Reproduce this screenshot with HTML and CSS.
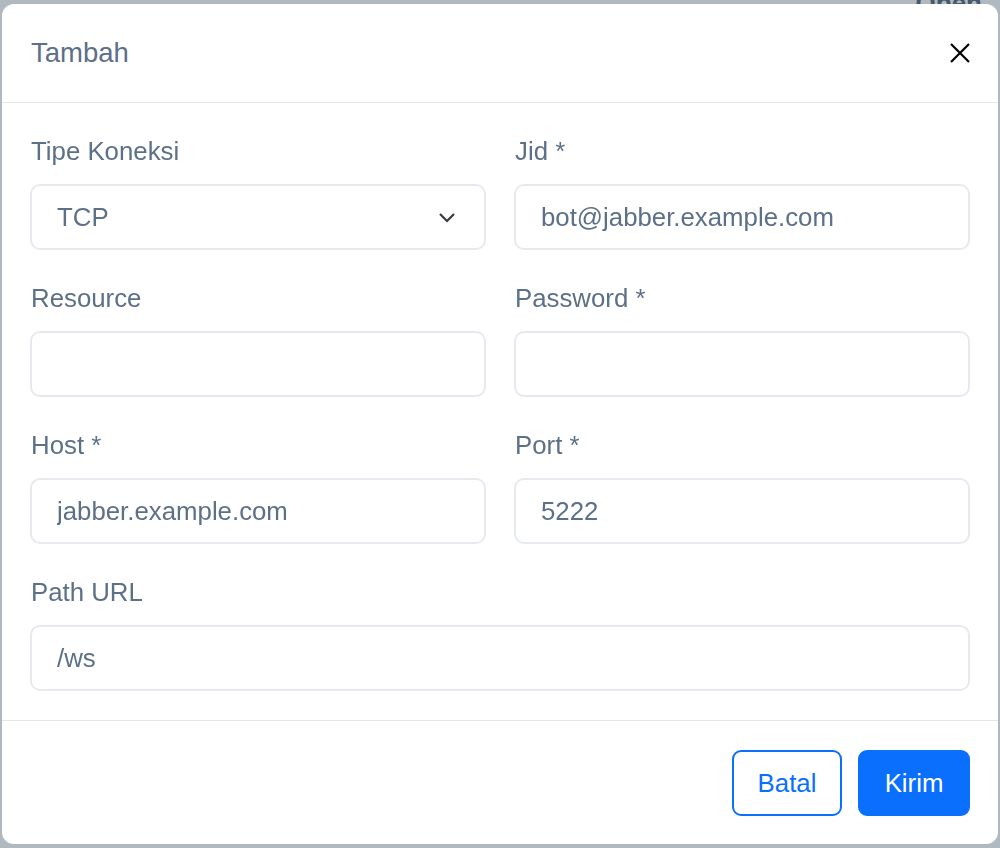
FILE: index.html
```html
<!DOCTYPE html>
<html lang="id">
<head>
    <meta charset="UTF-8">
    <meta name="viewport" content="width=device-width, initial-scale=1.0">
    <title>Tambah</title>
    <link rel="stylesheet" href="styles.css">
</head>
<body>
    <div class="page">
        <div class="page-top">
            <span class="page-action">Open</span>
        </div>
    </div>

    <div class="backdrop">
        <div class="modal">
            <div class="modal-header">
                <h5 class="modal-title">Tambah</h5>
                <button class="btn-close" type="button" aria-label="Close">
                    <svg width="20" height="20" viewBox="0 0 20 20">
                        <path d="M1 1 L19 19 M19 1 L1 19" stroke="#000" stroke-width="2.2" fill="none"/>
                    </svg>
                </button>
            </div>

            <div class="modal-body">
                <div class="form-grid">
                    <div class="form-group">
                        <label for="type">Tipe Koneksi</label>
                        <div class="select-wrap">
                            <select id="type">
                                <option>TCP</option>
                                <option>WebSocket</option>
                            </select>
                            <svg class="chevron" width="18" height="12" viewBox="0 0 18 12">
                                <path d="M2 3 L9 10 L16 3" stroke="#343a40" stroke-width="2.2" fill="none"/>
                            </svg>
                        </div>
                    </div>
                    <div class="form-group">
                        <label for="jid">Jid *</label>
                        <input type="text" id="jid" value="bot@jabber.example.com">
                    </div>

                    <div class="form-group">
                        <label for="resource">Resource</label>
                        <input type="text" id="resource">
                    </div>
                    <div class="form-group">
                        <label for="password">Password *</label>
                        <input type="password" id="password">
                    </div>

                    <div class="form-group">
                        <label for="host">Host *</label>
                        <input type="text" id="host" value="jabber.example.com">
                    </div>
                    <div class="form-group">
                        <label for="port">Port *</label>
                        <input type="text" id="port" value="5222">
                    </div>

                    <div class="form-group full">
                        <label for="path">Path URL</label>
                        <input type="text" id="path" value="/ws">
                    </div>
                </div>
            </div>

            <div class="modal-footer">
                <button class="btn btn-outline" type="button">Batal</button>
                <button class="btn btn-primary" type="button">Kirim</button>
            </div>
        </div>
    </div>
</body>
</html>
```

FILE: styles.css
```css
* {
    box-sizing: border-box;
}
body {
    margin: 0;
    font-family: "Liberation Sans", Arial, sans-serif;
    font-size: 25.8px;
    line-height: 1.5;
    background-color: #f4f6f8;
    height: 848px;
    overflow: hidden;
}
.page-top {
    display: flex;
    justify-content: flex-end;
    padding: 0 18px 0 0;
}
.page-action {
    font-weight: bold;
    font-size: 26px;
    color: #4c5e72;
    line-height: 1;
    margin-top: -10px;
}
.backdrop {
    position: fixed;
    inset: 0;
    background-color: rgba(60, 78, 98, 0.37);
    display: flex;
    align-items: flex-start;
    justify-content: center;
    padding: 4px 2px;
}
.modal {
    width: 996px;
    height: 840px;
    background-color: #fff;
    border-radius: 12px;
    display: flex;
    flex-direction: column;
}
.modal-header {
    display: flex;
    align-items: center;
    justify-content: space-between;
    padding: 28px 28px 28px 29px;
    border-bottom: 1px solid #e3e7ec;
}
.modal-title {
    margin: 0;
    font-size: 27.5px;
    font-weight: normal;
    line-height: 42px;
    color: #5c7087;
}
.btn-close {
    border: none;
    background: none;
    padding: 0;
    width: 20px;
    height: 20px;
    cursor: pointer;
}
.btn-close svg {
    display: block;
}
.modal-body {
    padding: 29px 28px 0 28px;
    flex: 1;
    min-height: 0;
}
.form-grid {
    display: grid;
    grid-template-columns: 1fr 1fr;
    column-gap: 28px;
}
.form-group {
    margin-bottom: 28.6px;
}
.form-group.full {
    grid-column: 1 / 3;
    margin-bottom: 0;
}
label {
    display: block;
    color: #5c7087;
    margin-bottom: 14px;
    padding-left: 1px;
    line-height: 38.4px;
}
input[type="text"], input[type="password"], select {
    display: block;
    width: 100%;
    height: 66px;
    padding: 12px 25px;
    font-family: inherit;
    font-size: 25.8px;
    color: #5c7087;
    background-color: #fff;
    border: 2px solid #e6eaef;
    border-radius: 10px;
    outline: none;
}
.select-wrap {
    position: relative;
}
select {
    appearance: none;
    -webkit-appearance: none;
}
.chevron {
    position: absolute;
    right: 30px;
    top: 27px;
    pointer-events: none;
}
.modal-footer {
    display: flex;
    justify-content: flex-end;
    gap: 16px;
    padding: 29px 28px 28px 28px;
    border-top: 1px solid #e3e7ec;
}
.btn {
    height: 66px;
    padding: 0 20px;
    font-family: inherit;
    font-size: 25.8px;
    border-radius: 9px;
    cursor: pointer;
}
.btn-outline {
    width: 110px;
    color: #0b6ffd;
    background-color: #fff;
    border: 2px solid #0b6ffd;
}
.btn-primary {
    width: 112px;
    color: #fff;
    background-color: #0b6ffd;
    border: 2px solid #0b6ffd;
}
```
